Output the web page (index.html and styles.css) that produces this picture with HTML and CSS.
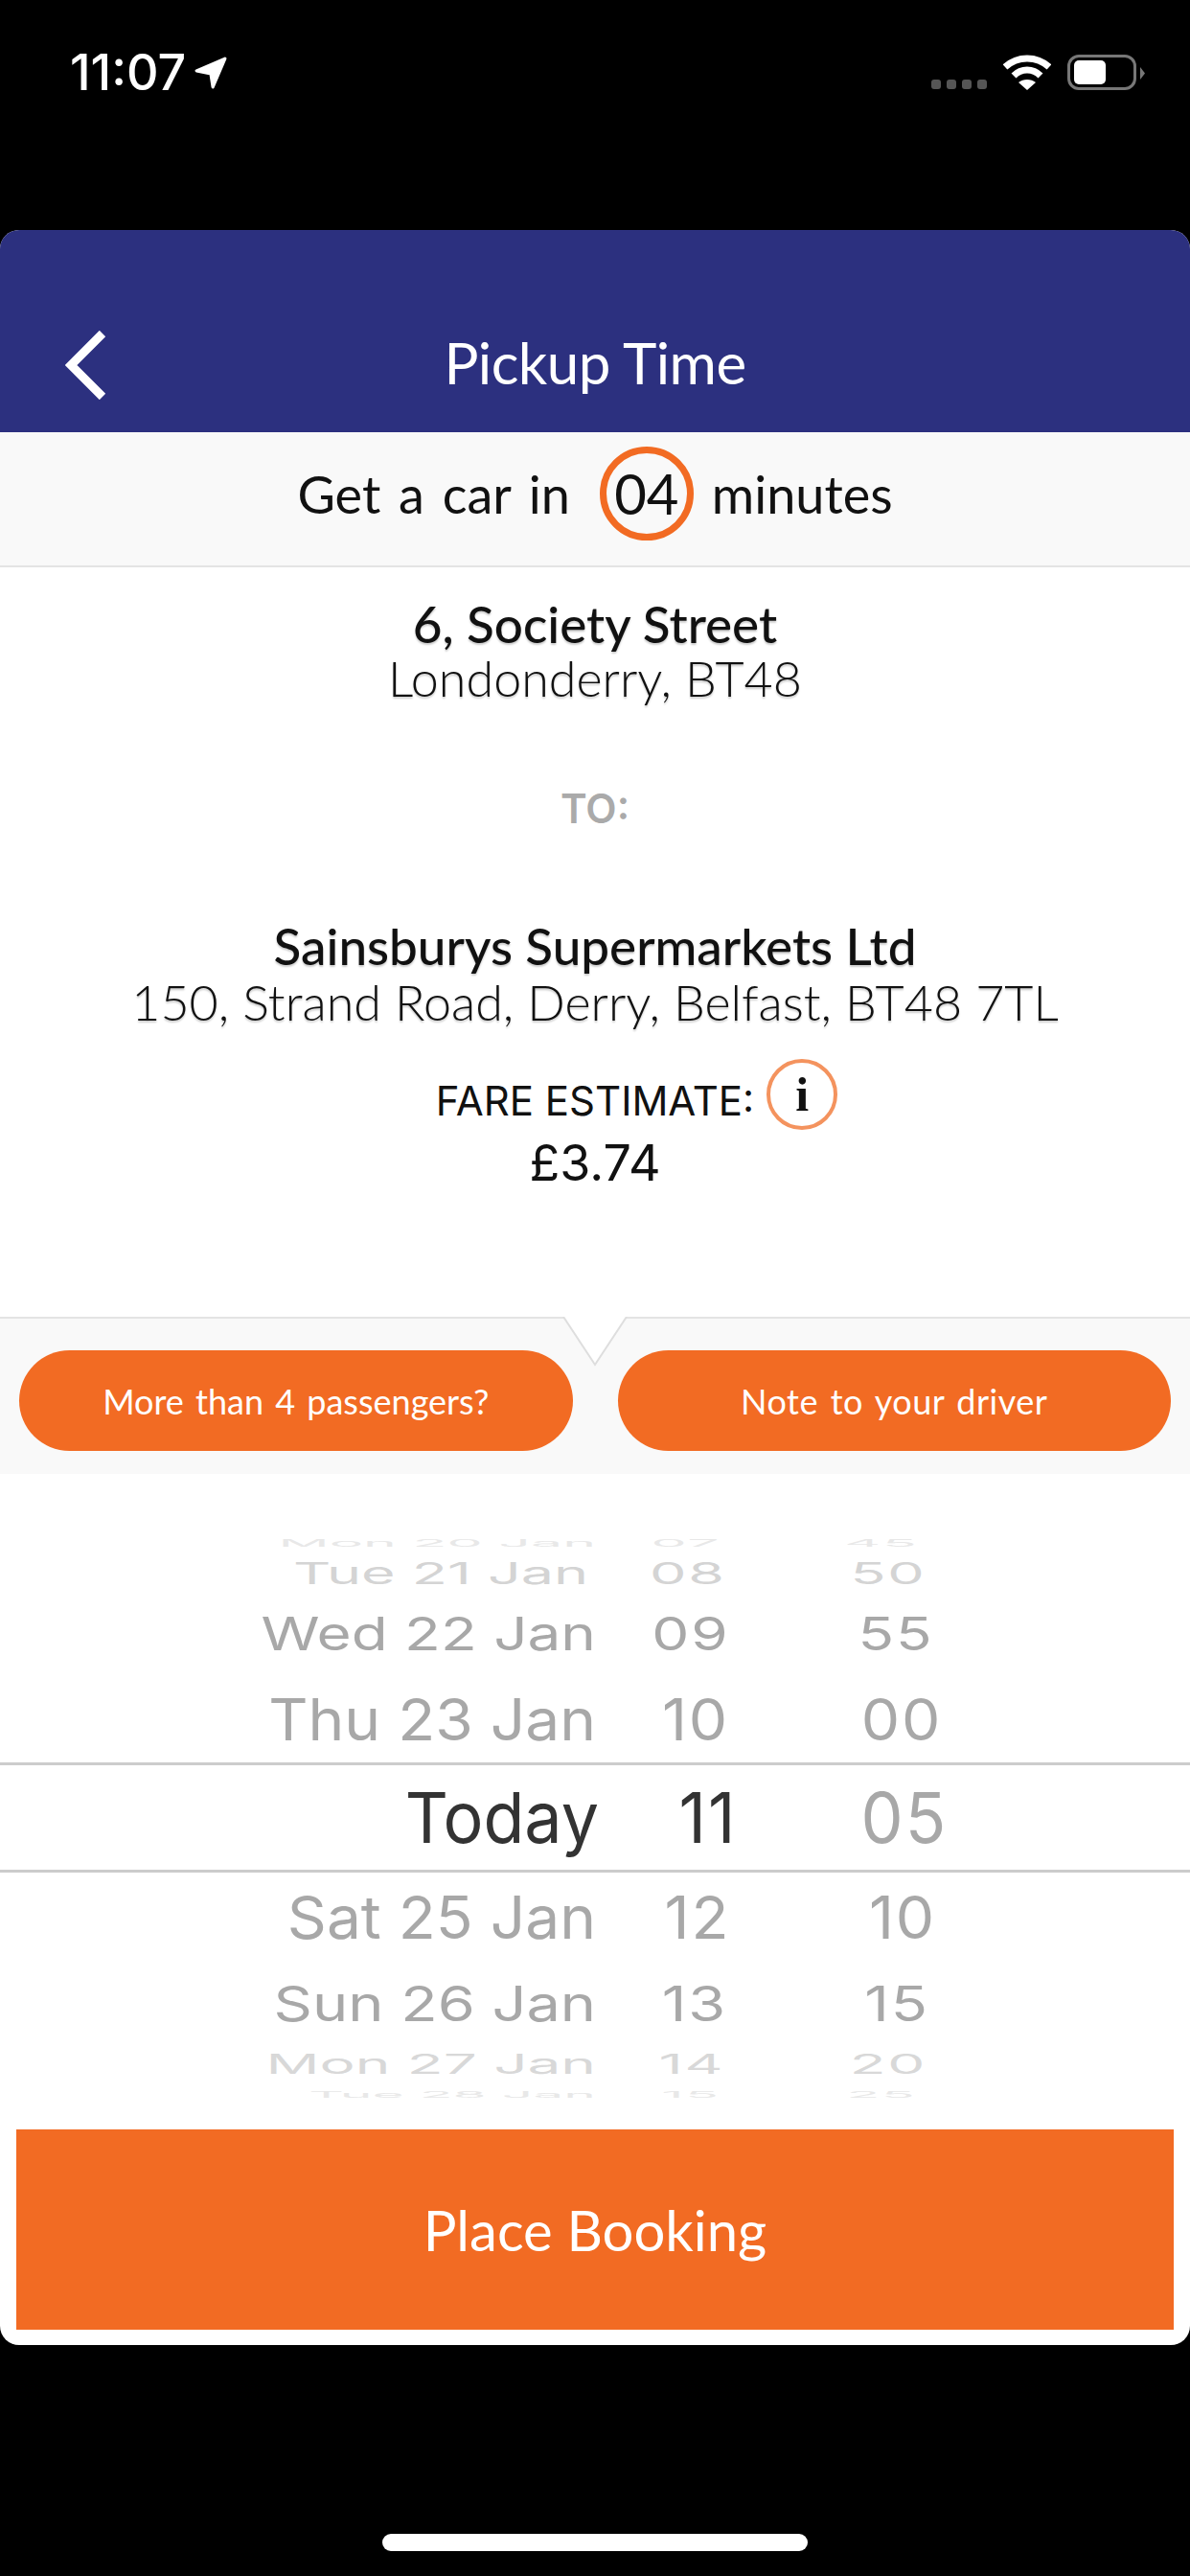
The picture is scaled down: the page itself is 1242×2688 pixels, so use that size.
FILE: index.html
```html
<!DOCTYPE html>
<html lang="en">
<head>
    <meta charset="UTF-8">
    <meta name="viewport" content="width=device-width, initial-scale=1.0">
    <title>Pickup Time</title>
    <link rel="stylesheet" href="styles.css">
</head>
<body>
    <div class="status-bar">
        <div class="status-left">
            <span class="clock">11:07</span>
            <svg class="location-arrow" viewBox="0 0 32 32"><path d="M30 2 L2 14 L16 17 L18 30 Z" fill="#fff" stroke="#fff" stroke-width="3" stroke-linejoin="round"/></svg>
        </div>
        <div class="status-right">
            <div class="signal"><i></i><i></i><i></i><i></i></div>
            <svg class="wifi" viewBox="0 0 50 37">
                <path d="M2 13 C15 1 35 1 48 13" fill="none" stroke="#fff" stroke-width="7"/>
                <path d="M11 22 C19 14 31 14 39 22" fill="none" stroke="#fff" stroke-width="7"/>
                <path d="M25 37 L16 29 C21 25 29 25 34 29 Z" fill="#fff"/>
            </svg>
            <div class="battery"><div class="battery-level"></div></div>
            <div class="battery-cap"></div>
        </div>
    </div>

    <div class="card">
        <header class="top-bar">
            <svg class="back" viewBox="0 0 44 72"><path d="M39 3 L6 36 L39 69" fill="none" stroke="#fff" stroke-width="9"/></svg>
            <h1>Pickup Time</h1>
        </header>

        <div class="eta">
            <span class="eta-text">Get a car in</span>
            <span class="eta-mins">04</span>
            <span class="eta-text">minutes</span>
        </div>

        <main class="trip">
            <p class="place-name">6, Society Street</p>
            <p class="place-addr">Londonderry, BT48</p>
            <p class="to-label">TO:</p>
            <p class="place-name dest">Sainsburys Supermarkets Ltd</p>
            <p class="place-addr dest">150, Strand Road, Derry, Belfast, BT48 7TL</p>
            <div class="fare-row">
                <span class="fare-label">FARE ESTIMATE:</span>
                <span class="info-btn">i</span>
            </div>
            <p class="fare-price">£3.74</p>
        </main>

        <div class="actions">
            <svg class="notch" viewBox="0 0 70 52"><path d="M2 0 L35 50 L68 0" fill="#fff" stroke="#dedede" stroke-width="2"/></svg>
            <button class="pill">More than 4 passengers?</button>
            <button class="pill pill-note">Note to your driver</button>
        </div>

        <div class="wheel">
            <div class="wheel-row r-edge-a"><span>Mon 20 Jan</span><span>07</span><span>45</span></div>
            <div class="wheel-row r-far-a"><span>Tue 21 Jan</span><span>08</span><span>50</span></div>
            <div class="wheel-row r-mid-a"><span>Wed 22 Jan</span><span>09</span><span>55</span></div>
            <div class="wheel-row r-near-a"><span>Thu 23 Jan</span><span>10</span><span>00</span></div>
            <div class="wheel-row r-selected"><span>Today</span><span>11</span><span class="min-selected">05</span></div>
            <div class="wheel-row r-near-b"><span>Sat 25 Jan</span><span>12</span><span>10</span></div>
            <div class="wheel-row r-mid-b"><span>Sun 26 Jan</span><span>13</span><span>15</span></div>
            <div class="wheel-row r-far-b"><span>Mon 27 Jan</span><span>14</span><span>20</span></div>
            <div class="wheel-row r-edge-b"><span>Tue 28 Jan</span><span>15</span><span>25</span></div>
        </div>

        <button class="place-booking">Place Booking</button>
    </div>

    <div class="home-bar"></div>
</body>
</html>
```

FILE: styles.css
```css
body {
    margin: 0;
    width: 1242px;
    height: 2688px;
    overflow: hidden;
    background: #000;
    font-family: Lato, "Noto Sans", sans-serif;
    display: flex;
    flex-direction: column;
}
p {
    margin: 0;
}

/* status bar */
.status-bar {
    height: 240px;
    box-sizing: border-box;
    padding: 57px 47px 0 73px;
    display: flex;
    justify-content: space-between;
    align-items: flex-start;
}
.status-left {
    display: flex;
    align-items: center;
    gap: 9px;
    height: 37px;
}
.clock {
    font-family: Inter, sans-serif;
    font-weight: 500;
    font-size: 52px;
    color: #fff;
    line-height: 37px;
}
.location-arrow {
    width: 34px;
    height: 34px;
}
.status-right {
    display: flex;
    align-items: flex-start;
}
.signal {
    display: flex;
    gap: 6px;
    margin-top: 26px;
    margin-right: 17px;
}
.signal i {
    width: 10px;
    height: 10px;
    background: #555;
    border-radius: 3px;
}
.wifi {
    width: 50px;
    height: 37px;
    margin-right: 17px;
}
.battery {
    width: 72px;
    height: 37px;
    box-sizing: border-box;
    border: 3px solid #777;
    border-radius: 12px;
    padding: 3px 4px;
}
.battery-level {
    width: 33px;
    height: 25px;
    background: #fff;
    border-radius: 5px;
}
.battery-cap {
    margin-top: 13px;
    margin-left: 4px;
    width: 5px;
    height: 13px;
    background: #777;
    clip-path: polygon(0 0, 100% 50%, 0 100%);
}

/* main card */
.card {
    height: 2207px;
    background: #fff;
    border-radius: 20px;
    overflow: hidden;
    display: flex;
    flex-direction: column;
}
.top-bar {
    height: 211px;
    box-sizing: border-box;
    padding-top: 70px;
    background: #2c307f;
    display: grid;
    grid-template-columns: 1fr auto 1fr;
    align-items: center;
}
.top-bar h1 {
    grid-column: 2;
    grid-row: 1;
    margin: 0 0 5px;
    font-weight: 400;
    font-size: 60px;
    color: #fff;
    letter-spacing: -0.5px;
}
.back {
    grid-column: 1;
    grid-row: 1;
    width: 44px;
    height: 72px;
    margin-left: 68px;
}
.eta {
    height: 141px;
    box-sizing: border-box;
    padding-bottom: 12px;
    background: #f9f9f9;
    border-bottom: 2px solid #e4e4e4;
    display: flex;
    justify-content: center;
    align-items: center;
    gap: 19px;
    font-size: 54px;
    color: #111;
    word-spacing: 5px;
}
.eta-text {
    padding-top: 2px;
}
.eta-mins {
    width: 98px;
    height: 98px;
    margin-left: 12px;
    box-sizing: border-box;
    border: 7px solid #f26b23;
    border-radius: 50%;
    display: flex;
    align-items: center;
    justify-content: center;
    font-size: 58px;
}

/* trip details */
.trip {
    height: 782px;
    box-sizing: border-box;
    padding-top: 30px;
    text-align: center;
    color: #111;
}
.place-name {
    font-size: 53px;
    line-height: 57px;
    font-weight: 500;
    text-shadow: 0 2px 2px rgba(0, 0, 0, 0.2);
}
.place-addr {
    font-size: 52px;
    line-height: 57px;
    font-weight: 300;
    text-shadow: 0 2px 2px rgba(0, 0, 0, 0.2);
}
.place-name.dest {
    margin-top: 93px;
}
.place-name.dest,
.place-addr.dest {
    line-height: 59px;
}
.to-label {
    margin-top: 88px;
    font-family: Inter, sans-serif;
    font-weight: 600;
    font-size: 42px;
    line-height: 40px;
    color: #aaa;
}
.fare-row {
    margin-top: 30px;
    display: grid;
    grid-template-columns: 1fr auto 1fr;
    align-items: center;
    column-gap: 13px;
}
.fare-label {
    grid-column: 2;
    padding-top: 12px;
    font-family: Inter, sans-serif;
    font-size: 42px;
}
.info-btn {
    grid-column: 3;
    width: 74px;
    height: 74px;
    box-sizing: border-box;
    border: 4px solid #f4935e;
    border-radius: 50%;
    display: flex;
    align-items: center;
    justify-content: center;
    font-family: "Liberation Serif", serif;
    font-weight: 700;
    font-size: 50px;
}
.fare-price {
    margin-top: 5px;
    font-family: Inter, sans-serif;
    font-size: 52px;
    line-height: 60px;
}

/* the two pills and the notch */
.actions {
    position: relative;
    height: 164px;
    box-sizing: border-box;
    padding: 33px 20px 0;
    background: #f9f9f9;
    border-top: 2px solid #e4e4e4;
    display: flex;
    gap: 47px;
    align-items: flex-start;
}
.notch {
    position: absolute;
    left: 586px;
    top: -2px;
    width: 70px;
    height: 52px;
}
.pill {
    position: relative;
    flex: 1;
    height: 105px;
    border: none;
    border-radius: 53px;
    background: #f26b23;
    color: #fff;
    font-family: Lato, sans-serif;
    font-size: 36px;
    word-spacing: 3px;
}
.pill-note {
    letter-spacing: 0.5px;
}

/* date and time wheel */
.wheel {
    height: 684px;
    box-sizing: border-box;
    padding-top: 60px;
    background: #fff;
    display: flex;
    flex-direction: column;
    font-family: Inter, sans-serif;
    line-height: 1;
}
.wheel-row {
    display: grid;
    grid-template-columns: 622px 198px 230px;
    grid-template-rows: minmax(0, 1fr);
    align-items: center;
    text-align: center;
    white-space: nowrap;
    color: #a8a8a8;
}
.wheel-row span {
    display: block;
    letter-spacing: 0.03em;
    transform: translateX(var(--shift, 0)) scaleY(var(--squash, 1));
}
.wheel-row span:first-child {
    --shift: var(--date-x, 0);
    letter-spacing: 0;
    text-align: right;
}
.wheel-row span:nth-child(2) {
    --shift: var(--hour-x);
}
.wheel-row span:nth-child(3) {
    --shift: var(--min-x);
}
.r-edge-a { height: 24px; font-size: 59px; --squash: 0.18; color: #e8e8e8; --hour-x: -5px; --min-x: -15px; }
.r-far-a { height: 38px; font-size: 61px; --squash: 0.52; color: #d4d4d4; --date-x: -8px; --hour-x: -3px; --min-x: -8px; }
.r-mid-a { height: 89px; font-size: 62px; --squash: 0.78; --hour-x: 0px; --min-x: 0px; }
.r-near-a { height: 90px; font-size: 64px; --squash: 0.94; --hour-x: 5px; --min-x: 6px; }
.r-selected {
    height: 115px;
    box-sizing: border-box;
    font-size: 70px;
    --squash: 1.05;
    --date-x: 3px;
    --hour-x: 18px;
    --min-x: 9px;
    color: #333;
    border-top: 3px solid #ccc;
    border-bottom: 3px solid #ccc;
}
.r-selected .min-selected {
    color: #a8a8a8;
}
.r-near-b { height: 94px; font-size: 64px; --squash: 0.97; --hour-x: 7px; --min-x: 7px; }
.r-mid-b { height: 84px; font-size: 63px; --squash: 0.8; --hour-x: 4px; --min-x: 1px; }
.r-far-b { height: 44px; font-size: 62px; --squash: 0.46; color: #d8d8d8; --hour-x: 1px; --min-x: -8px; }
.r-edge-b { height: 19px; font-size: 57px; --squash: 0.16; color: #e8e8e8; --hour-x: 0px; --min-x: -15px; }

.place-booking {
    margin: 0 17px;
    height: 209px;
    flex-shrink: 0;
    border: none;
    background: #f26b23;
    color: #fff;
    font-family: Lato, sans-serif;
    font-size: 58px;
}

.home-bar {
    width: 444px;
    height: 18px;
    margin: 197px auto 0;
    background: #fff;
    border-radius: 9px;
}
```
